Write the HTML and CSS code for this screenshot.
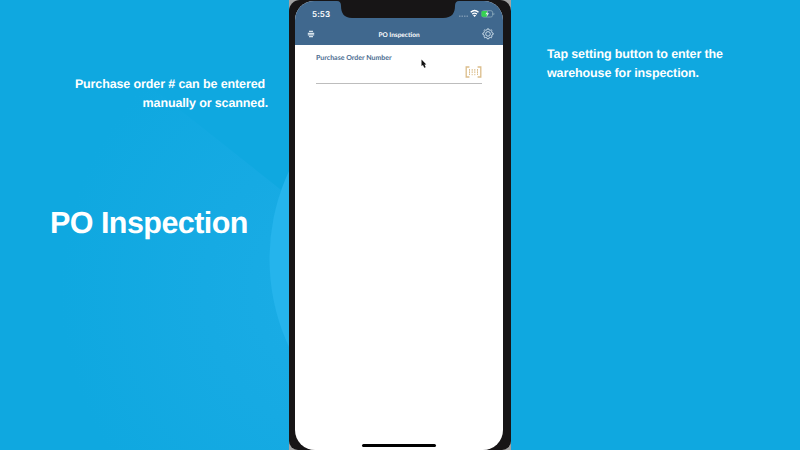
FILE: index.html
```html
<!DOCTYPE html>
<html lang="en">
<head>
<meta charset="utf-8">
<title>PO Inspection</title>
<link rel="stylesheet" href="styles.css">
</head>
<body>
<main class="stage">
  <svg class="backdrop" viewBox="0 0 800 450" aria-hidden="true">
    <defs>
      <radialGradient id="glow" gradientUnits="userSpaceOnUse" cx="350" cy="290" r="290">
        <stop offset="0" stop-color="#1cade6"/>
        <stop offset=".5" stop-color="#16aae3"/>
        <stop offset="1" stop-color="#0fa8e0"/>
      </radialGradient>
    </defs>
    <path d="M0 0 L160 94 L290 197 L511 60 L800 0 V450 H0Z" fill="url(#glow)"/>
    <circle cx="478" cy="259" r="208.500" fill="#25b4ec"/>
    <path d="M511 0H800V450H511Z" fill="#0fa8e0"/>
  </svg>

  <section class="side side-left">
    <p class="note note-left"><span class="line line-a">Purchase order # can be entered</span><span class="line">manually or scanned.</span></p>
    <h1 class="title">PO Inspection</h1>
  </section>

  <section class="phone-slot">
    <div class="phone">
      <div class="screen">
        <header class="header">
          <div class="status">
            <span class="time">5:53</span>
            <svg class="indicators" width="40" height="12" viewBox="0 0 40 12">
              <path fill="#7895b0" d="M4 7.500h1.500v1.500H4zM6.500 7.500H8v1.500H6.500zM9 7.500h1.500v1.500H9zM11.500 7.500H13v1.500h-1.500z"/>
              <g fill="none" stroke="#fff" stroke-width="1.400"><path d="M15.700 4.300Q19.600 .8 23.500 4.300M17.300 6.100Q19.600 4.200 21.900 6.100"/></g>
              <path d="M18 7.300Q19.600 6.300 21.200 7.300L19.600 9Z" fill="#fff"/>
              <rect x="27" y="2.700" width="10.500" height="6.300" rx="1.600" fill="none" stroke="#7f9fb4"/>
              <path d="M27.500 3H32v5.700h-4.500q-1 0-1-1V4q0-1 1-1Z" fill="#35d153"/>
              <path d="M38.500 4.800q1 1 0 2.300" stroke="#7f9fb4" fill="none"/>
              <path d="m33 2.700-2.600 3.600h1.800L31.400 9l2.700-3.700h-1.800Z" fill="#e9f8ec"/>
            </svg>
          </div>
          <nav class="nav">
            <svg class="menu" width="8" height="8" viewBox="0 0 8 8" fill="none" stroke="#d5e2ec" stroke-width="1.200"><path d="M2 1.400h4M.8 3.300h6.400M.8 4.900h6.400M2 6.700h4"/></svg>
            <span class="nav-title">PO Inspection</span>
            <svg class="gear" width="12" height="12" viewBox="0 0 12 12" fill="none" stroke="#d7e5ef" stroke-width=".9" stroke-linejoin="round">
              <path d="M5.200 1.700 5.400.8h1.200l.2.900 1.500.6.900-.5.900.9-.5.900.6 1.300 1 .3v1.200l-1 .3-.6 1.400.5.900-.9.900-.9-.5-1.500.6-.2.900H5.400l-.2-.9-1.500-.6-.9.500-.9-.9.500-.9-.6-1.400-1-.3V5.200l1-.3.600-1.300-.5-.9.900-.9.900.5Z"/>
              <circle cx="6" cy="5.900" r="2.300"/>
            </svg>
          </nav>
          <div class="notch">
            <svg width="122" height="17" viewBox="0 0 122 17"><path d="M0 0H122Q118 0 118 5C118 12 115 17 106 17H15C7 17 4 12 4 5Q4 0 0 0Z" fill="#171516"/></svg>
          </div>
        </header>
        <div class="form">
          <div class="label">Purchase Order Number</div>
          <div class="field">
            <svg width="17" height="12" viewBox="0 0 17 12" fill="none" stroke="#dbbd8a">
              <path d="M4.400 1H1.200V11H4.400M12.600 1H15.800V11H12.600" stroke-width="1.300"/>
              <path d="M4.500 3v6M7.200 3v4.500M9.800 3v4.500M12.500 3v6" stroke-dasharray="1.800 .5"/>
              <path d="M6.600 8.700h1.200M9.200 8.700h1.200"/>
            </svg>
          </div>
        </div>
        <div class="home"></div>
      </div>
    </div>
    <svg class="cursor" width="6" height="10" viewBox="0 0 6 10"><path d="M.5.500V7L2 5.900 3.200 8.800 4.700 8.200 3.500 5.500H5.300Z" fill="#111"/></svg>
  </section>

  <section class="side side-right">
    <p class="note note-right"><span class="line">Tap setting button to enter the</span><span class="line">warehouse for inspection.</span></p>
  </section>
</main>
</body>
</html>
```
FILE: styles.css
```css
* { box-sizing: border-box; }
body { margin: 0; text-rendering: geometricPrecision; }
.stage {
  position: relative;
  display: grid;
  grid-template-columns: 289px 222px 289px;
  width: 800px;
  height: 450px;
  overflow: hidden;
  background: #0fa8e0;
  color: #fff;
  font-family: "Liberation Sans", Arial, sans-serif;
}
.backdrop { position: absolute; inset: 0; width: 800px; height: 450px; }
.side, .phone-slot { position: relative; }
.side-left { padding: 75px 21px 0 50px; }
.side-right { padding: 45px 0 0 36px; }
.note { margin: 0; font-size: 12.5px; line-height: 19px; font-weight: 700; letter-spacing: -0.12px; }
.note-left { text-align: right; }
.line { display: block; white-space: nowrap; }
.line-a { padding-right: 3px; }
.title {
  margin: 89px 0 0;
  font-size: 30.5px;
  line-height: 42px;
  font-weight: 700;
  letter-spacing: -0.55px;
  white-space: nowrap;
}
.phone-slot { background: #a3a3a3; height: 450px; }
.phone {
  height: 450px;
  padding: 1px 8px 0 6px;
  background: #171516;
  border-radius: 11px 11px 9px 9px;
}
.screen {
  position: relative;
  display: flex;
  flex-direction: column;
  height: 449px;
  border-radius: 19px 19px 20px 20px;
  background: #fff;
  overflow: hidden;
}
.header { position: relative; height: 44px; background: #40688e; }
.notch { position: absolute; left: 42px; top: 0; height: 17px; }
.notch svg { display: block; }
.status {
  display: flex;
  align-items: center;
  justify-content: space-between;
  height: 24px;
  padding: 1px 8px 0 17px;
}
.time { font: 600 8px/12px Inter, sans-serif; letter-spacing: .1px; }
.nav {
  display: grid;
  grid-template-columns: 12px 1fr 12px;
  align-items: center;
  height: 18px;
  padding: 0 9px 0 12px;
}
.nav-title { text-align: center; font: 700 6.5px/12px Lato, sans-serif; padding: 3px 3px 0 0; }
.form { padding: 7px 21px 0; }
.label { color: #4b6d91; font: 700 7px/12px Lato, sans-serif; }
.field {
  display: flex;
  justify-content: flex-end;
  height: 20px;
  padding-top: 2px;
  border-bottom: 1px solid #bdbdbd;
}
.home { width: 74px; height: 3px; margin: auto auto 3px 67px; border-radius: 2px; background: #000; }
.cursor { position: absolute; left: 132px; top: 59px; }
```
